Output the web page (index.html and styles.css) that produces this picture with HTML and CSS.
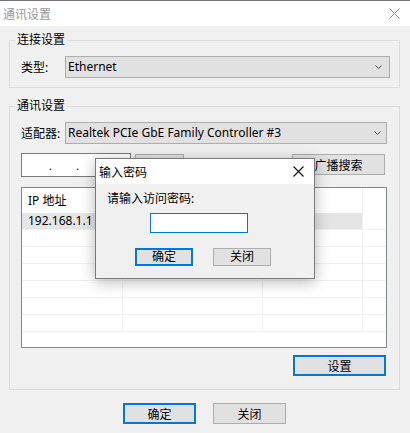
FILE: index.html
```html
<!DOCTYPE html>
<html>
<head>
	<meta charset="utf-8">
	<title>通讯设置</title>
	<link rel="stylesheet" href="styles.css">
</head>
<body>
  <div class="window">

    <div class="titlebar">
      <span class="title">通讯设置</span>
      <svg class="close" width="11" height="11" viewBox="0 0 11 11"><path d="M0.5 0.5 L10.5 10.5 M10.5 0.5 L0.5 10.5" stroke="#8a8a8a" stroke-width="1" fill="none"/></svg>
    </div>

    <div class="client">

      <!-- connection type -->
      <div class="group group-conn">
        <span class="group-title">连接设置</span>
        <div class="field-row">
          <span class="field-label">类型:</span>
          <div class="combo combo-type">
            <span>Ethernet</span>
            <svg width="7" height="4" viewBox="0 0 7 4"><path d="M0.5 0.5 L3.5 3.5 L6.5 0.5" stroke="#444" fill="none"/></svg>
          </div>
        </div>
      </div>

      <!-- communication settings -->
      <div class="group group-comm">
        <span class="group-title">通讯设置</span>
        <div class="field-row">
          <span class="field-label">适配器:</span>
          <div class="combo combo-adapter">
            <span>Realtek PCIe GbE Family Controller #3</span>
            <svg width="7" height="4" viewBox="0 0 7 4"><path d="M0.5 0.5 L3.5 3.5 L6.5 0.5" stroke="#444" fill="none"/></svg>
          </div>
        </div>

        <div class="tool-row">
          <div class="ip-box">
            <span class="ip-part"></span><span class="ip-dot">.</span>
            <span class="ip-part"></span><span class="ip-dot">.</span>
            <span class="ip-part"></span><span class="ip-dot">.</span>
            <span class="ip-part"></span>
          </div>
          <!-- this button sits under the popup, its caption is hidden -->
          <button class="btn btn-small"></button>
          <button class="btn btn-wide">广播搜索</button>
        </div>

        <div class="list">
          <div class="list-row list-head">
            <span class="cell c1">IP 地址</span><span class="cell c2"></span><span class="cell c3"></span><span class="cell c4"></span>
          </div>
          <div class="list-row selected">
            <span class="cell c1">192.168.1.1</span><span class="cell c2"></span><span class="cell c3"></span><span class="cell c4"></span>
          </div>
          <div class="list-row"><span class="cell c1"></span><span class="cell c2"></span><span class="cell c3"></span><span class="cell c4"></span></div>
          <div class="list-row"><span class="cell c1"></span><span class="cell c2"></span><span class="cell c3"></span><span class="cell c4"></span></div>
          <div class="list-row"><span class="cell c1"></span><span class="cell c2"></span><span class="cell c3"></span><span class="cell c4"></span></div>
          <div class="list-row"><span class="cell c1"></span><span class="cell c2"></span><span class="cell c3"></span><span class="cell c4"></span></div>
          <div class="list-row"><span class="cell c1"></span><span class="cell c2"></span><span class="cell c3"></span><span class="cell c4"></span></div>
          <div class="list-row"><span class="cell c1"></span><span class="cell c2"></span><span class="cell c3"></span><span class="cell c4"></span></div>
        </div>

        <div class="set-row">
          <button class="btn btn-wide btn-default">设置</button>
        </div>
      </div>

      <div class="bottom-row">
        <button class="btn btn-main btn-default">确定</button>
        <button class="btn btn-main">关闭</button>
      </div>
    </div>

    <!-- password popup over the window -->
    <div class="dialog">
      <div class="dialog-title">
        <span>输入密码</span>
        <svg width="11" height="11" viewBox="0 0 11 11"><path d="M0.5 0.5 L10.5 10.5 M10.5 0.5 L0.5 10.5" stroke="#111" stroke-width="1.1" fill="none"/></svg>
      </div>
      <div class="dialog-body">
        <div class="dialog-label">请输入访问密码:</div>
        <div class="pwd-box"></div>
        <div class="dialog-buttons">
          <button class="btn btn-dlg btn-default">确定</button>
          <button class="btn btn-dlg">关闭</button>
        </div>
      </div>
    </div>

  </div>
</body>
</html>
```

FILE: styles.css
```css
html body{
  margin: 0;
  overflow: hidden;
}

body{
  width: 410px;
  height: 433px;
  background: #f0f0f0;
  font-family: "Noto Sans", "Noto Sans CJK SC", sans-serif;
  font-size: 12px;
  color: #000;
}

.window{
  position: relative;
  height: 433px;
}

.titlebar{
  height: 25px;
  border-top: 1px solid #767676;
  background: #fff;
  display: flex;
  align-items: center;
  justify-content: space-between;
  padding: 0 10px 0 3px;
}

.title{
  color: #999;
  font-size: 12px;
}

.close{
  margin-top: -1px;
}

.client{
  padding: 14px 10px 0 9px;
}

.group{
  border: 1px solid #dcdcdc;
}

.group-title{
  display: block;
  width: fit-content;
  margin: -9px 0 0 5px;
  padding: 0 2px;
  line-height: 16px;
  background: #f0f0f0;
}

.field-row{
  display: flex;
  align-items: center;
  margin-top: 8px;
  padding-left: 11px;
}

.field-label{
  width: 44px;
}

.combo{
  box-sizing: border-box;
  height: 22px;
  border: 1px solid #adadad;
  background: #e1e1e1;
  display: flex;
  align-items: center;
  justify-content: space-between;
  padding: 0 7px 1px 2px;
}

.combo-type{
  width: 325px;
}

.group-conn{
  padding-bottom: 9px;
}

.combo-adapter{
  width: 322px;
  padding-right: 5px;
}

.group-comm{
  margin-top: 18px;
  padding-bottom: 13px;
}

.tool-row{
  display: flex;
  align-items: flex-start;
  margin-top: 9px;
  padding: 0 14px 0 11px;
}

.ip-box{
  box-sizing: border-box;
  width: 110px;
  height: 24px;
  border: 1px solid #7a7a7a;
  background: #fff;
  display: flex;
  align-items: center;
  padding-left: 1px;
}

.ip-part{
  width: 26px;
}

.ip-dot{
  width: 1px;
  font-size: 11px;
  line-height: 11px;
  margin-top: 1px;
}

.btn{
  box-sizing: border-box;
  border: 1px solid #adadad;
  background: #e1e1e1;
  font-family: "Noto Sans", "Noto Sans CJK SC", sans-serif;
  font-size: 12px;
  color: #000;
  padding: 0;
  margin: 0;
}

.btn-default{
  border: 2px solid #0078d7;
}

.btn-small{
  width: 49px;
  height: 21px;
  margin: 1px 0 0 4px;
}

.btn-wide{
  width: 93px;
  height: 21px;
}

.tool-row .btn-wide{
  margin: 1px 0 0 auto;
}

.list{
  box-sizing: border-box;
  width: 366px;
  height: 161px;
  margin: 10px 0 0 11px;
  border: 1px solid #828790;
  background: #fff;
  overflow: hidden;
}

.list-row{
  display: flex;
  height: 16px;
  border-bottom: 1px solid #f0f0f0;
}

.list-head{
  height: 25px;
  border-bottom: none;
}

.list-row.selected{
  background: linear-gradient(to right, #e5e5e5 341px, #fff 341px);
}

.cell{
  box-sizing: border-box;
  border-right: 1px solid #f0f0f0;
  padding-left: 6px;
  line-height: 16px;
  white-space: nowrap;
}

.list-head .cell{
  line-height: 26px;
}

.c1{ width: 101px; }
.c2{ width: 140px; }
.c3{ width: 100px; }
.c4{ flex: 1; border-right: none; }

.set-row{
  display: flex;
  justify-content: flex-end;
  margin-top: 7px;
  padding-right: 13px;
}

.bottom-row{
  display: flex;
  justify-content: center;
  gap: 17px;
  margin-top: 13px;
}

.btn-main{
  width: 73px;
  height: 21px;
}

/* popup */

.dialog{
  position: absolute;
  left: 95px;
  top: 158px;
  box-sizing: border-box;
  width: 220px;
  height: 121px;
  border: 1px solid #7a7a7a;
  background: #f0f0f0;
  box-shadow: 0 3px 14px rgba(0,0,0,0.28);
}

.dialog-title{
  height: 25px;
  background: #fff;
  display: flex;
  align-items: center;
  justify-content: space-between;
  padding: 0 10px 0 3px;
}

.dialog-body{
  padding-left: 11px;
}

.dialog-label{
  line-height: 16px;
  margin-top: 7px;
}

.pwd-box{
  box-sizing: border-box;
  width: 98px;
  height: 20px;
  margin: 6px 0 0 43px;
  border: 1px solid #0078d7;
  background: #fff;
}

.dialog-buttons{
  display: flex;
  gap: 20px;
  margin: 15px 0 0 28px;
}

.btn-dlg{
  width: 58px;
  height: 18px;
  line-height: 14px;
}
```
